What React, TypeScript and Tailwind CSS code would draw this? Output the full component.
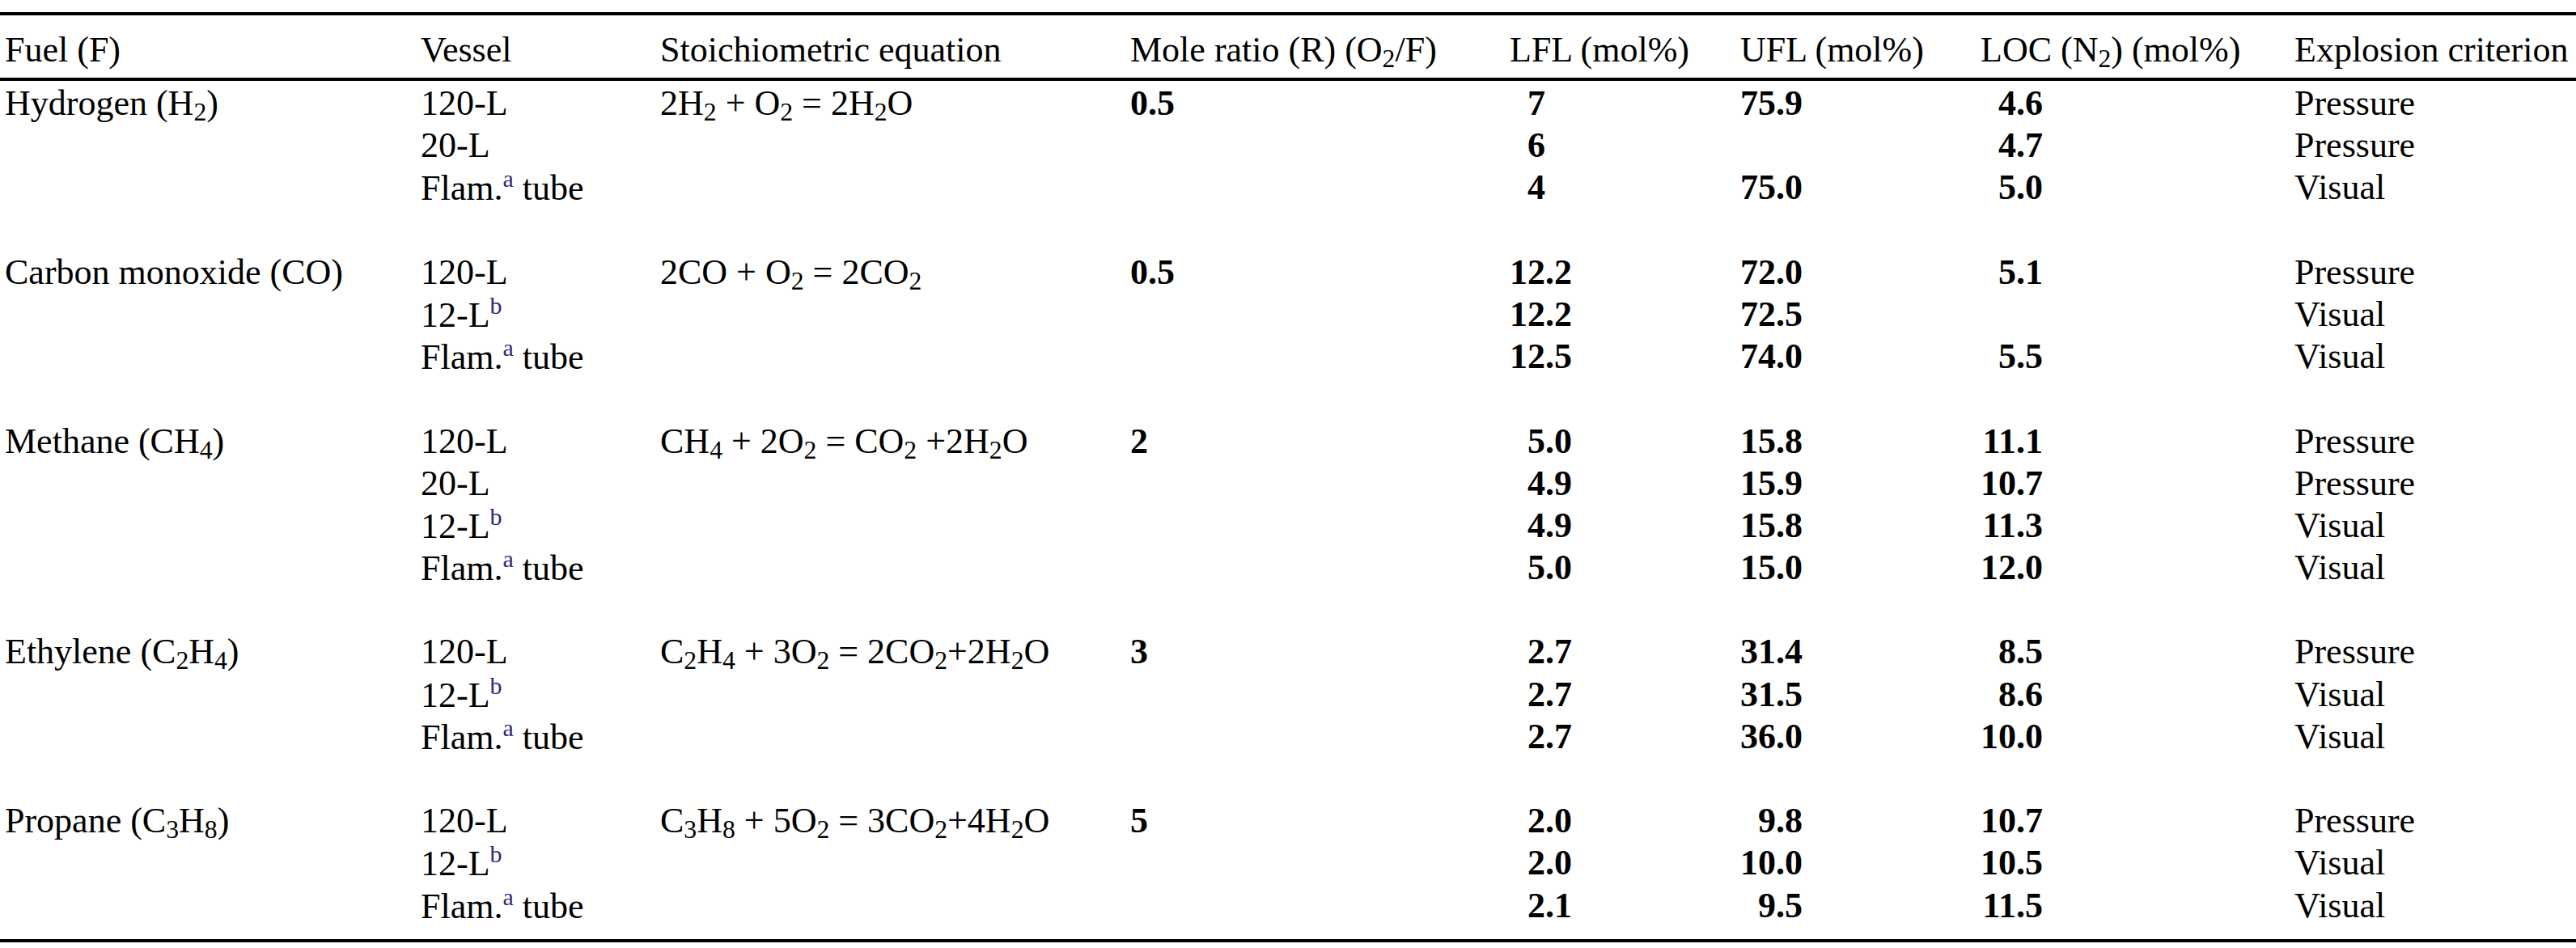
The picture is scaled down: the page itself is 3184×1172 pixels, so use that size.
import React from 'react';

type Vessel = { name: string; note?: string; tail?: string };

interface TableRow {
  fuel?: React.ReactNode;
  vessel?: Vessel;
  equation?: React.ReactNode;
  ratio?: string;
  lfl?: string;
  ufl?: string;
  loc?: string;
  criterion?: string;
}

const Sub = ({ children }: { children: React.ReactNode }) => (
  <span className="text-[0.72em] leading-none align-[-0.22em]">{children}</span>
);

const Sup = ({ children }: { children: React.ReactNode }) => (
  <span className="text-[0.68em] leading-none align-[0.52em] text-[#2b2878]">{children}</span>
);

const v120: Vessel = { name: '120-L' };
const v20: Vessel = { name: '20-L' };
const v12: Vessel = { name: '12-L', note: 'b' };
const flam: Vessel = { name: 'Flam.', note: 'a', tail: ' tube' };

const rows: (TableRow | null)[] = [
  {
    fuel: <>Hydrogen (H<Sub>2</Sub>)</>,
    vessel: v120,
    equation: <>2H<Sub>2</Sub> + O<Sub>2</Sub> = 2H<Sub>2</Sub>O</>,
    ratio: '0.5', lfl: '7', ufl: '75.9', loc: '4.6', criterion: 'Pressure',
  },
  { vessel: v20, lfl: '6', loc: '4.7', criterion: 'Pressure' },
  { vessel: flam, lfl: '4', ufl: '75.0', loc: '5.0', criterion: 'Visual' },
  null,
  {
    fuel: <>Carbon monoxide (CO)</>,
    vessel: v120,
    equation: <>2CO + O<Sub>2</Sub> = 2CO<Sub>2</Sub></>,
    ratio: '0.5', lfl: '12.2', ufl: '72.0', loc: '5.1', criterion: 'Pressure',
  },
  { vessel: v12, lfl: '12.2', ufl: '72.5', criterion: 'Visual' },
  { vessel: flam, lfl: '12.5', ufl: '74.0', loc: '5.5', criterion: 'Visual' },
  null,
  {
    fuel: <>Methane (CH<Sub>4</Sub>)</>,
    vessel: v120,
    equation: <>CH<Sub>4</Sub> + 2O<Sub>2</Sub> = CO<Sub>2</Sub> +2H<Sub>2</Sub>O</>,
    ratio: '2', lfl: '5.0', ufl: '15.8', loc: '11.1', criterion: 'Pressure',
  },
  { vessel: v20, lfl: '4.9', ufl: '15.9', loc: '10.7', criterion: 'Pressure' },
  { vessel: v12, lfl: '4.9', ufl: '15.8', loc: '11.3', criterion: 'Visual' },
  { vessel: flam, lfl: '5.0', ufl: '15.0', loc: '12.0', criterion: 'Visual' },
  null,
  {
    fuel: <>Ethylene (C<Sub>2</Sub>H<Sub>4</Sub>)</>,
    vessel: v120,
    equation: <>C<Sub>2</Sub>H<Sub>4</Sub> + 3O<Sub>2</Sub> = 2CO<Sub>2</Sub>+2H<Sub>2</Sub>O</>,
    ratio: '3', lfl: '2.7', ufl: '31.4', loc: '8.5', criterion: 'Pressure',
  },
  { vessel: v12, lfl: '2.7', ufl: '31.5', loc: '8.6', criterion: 'Visual' },
  { vessel: flam, lfl: '2.7', ufl: '36.0', loc: '10.0', criterion: 'Visual' },
  null,
  {
    fuel: <>Propane (C<Sub>3</Sub>H<Sub>8</Sub>)</>,
    vessel: v120,
    equation: <>C<Sub>3</Sub>H<Sub>8</Sub> + 5O<Sub>2</Sub> = 3CO<Sub>2</Sub>+4H<Sub>2</Sub>O</>,
    ratio: '5', lfl: '2.0', ufl: '9.8', loc: '10.7', criterion: 'Pressure',
  },
  { vessel: v12, lfl: '2.0', ufl: '10.0', loc: '10.5', criterion: 'Visual' },
  { vessel: flam, lfl: '2.1', ufl: '9.5', loc: '11.5', criterion: 'Visual' },
];

// decimal aligned: integers keep the room of ".0" on the right
function Num({ value }: { value?: string }) {
  if (!value) return <div />;
  const whole = !value.includes('.');
  return (
    <div className={whole ? 'w-[77px] text-right font-bold pr-[33px]' : 'w-[77px] text-right font-bold'}>
      {value}
    </div>
  );
}

const cols = 'grid grid-cols-[514px_296px_581px_469px_285px_297px_388px_1fr] pl-[6px] whitespace-nowrap';

function BodyRow({ row }: { row: TableRow | null }) {
  if (!row) return <div className="h-[52.2px]" />;
  return (
    <div className={`${cols} h-[52.2px] leading-[52.2px]`}>
      <div>{row.fuel}</div>
      <div>
        {row.vessel && (
          <>
            {row.vessel.name}
            {row.vessel.note && <Sup>{row.vessel.note}</Sup>}
            {row.vessel.tail}
          </>
        )}
      </div>
      <div>{row.equation}</div>
      <div className="font-bold">{row.ratio}</div>
      <Num value={row.lfl} />
      <Num value={row.ufl} />
      <Num value={row.loc} />
      <div>{row.criterion}</div>
    </div>
  );
}

export default function App() {
  return (
    <div className="w-[3184px] h-[1172px] overflow-hidden bg-white pt-[15px] text-[44px] text-black font-['Liberation_Serif',serif]">
      <div className="border-t-4 border-b-4 border-black pb-[15px]">
        {/* Header */}
        <div className={`${cols} h-[81px] pt-[17px] leading-[52.2px] border-b-4 border-black`}>
          <div>Fuel (F)</div>
          <div>Vessel</div>
          <div>Stoichiometric equation</div>
          <div>Mole ratio (R) (O<Sub>2</Sub>/F)</div>
          <div>LFL (mol%)</div>
          <div>UFL (mol%)</div>
          <div>LOC (N<Sub>2</Sub>) (mol%)</div>
          <div>Explosion criterion</div>
        </div>

        {/* Body */}
        <div className="pt-[2px]">
          {rows.map((row, i) => (
            <BodyRow key={i} row={row} />
          ))}
        </div>
      </div>
    </div>
  );
}
